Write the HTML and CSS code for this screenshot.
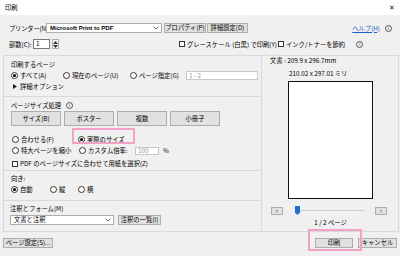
FILE: index.html
```html
<!DOCTYPE html>
<html lang="ja">
<head>
<meta charset="UTF-8">
<title>印刷</title>
<link rel="stylesheet" href="styles.css">
</head>
<body>
    <div class="titlebar">
        <span>印刷</span>
        <span class="close">✕</span>
    </div>
    <div class="top">
        <div class="row">
            <span class="lbl lbl-printer">プリンター(N):</span>
            <div class="select select-printer">
                <span>Microsoft Print to PDF</span>
                <svg class="chev" width="6" height="4" viewBox="0 0 6 4"><path d="M0.5 0.5 L3 3 L5.5 0.5" fill="none" stroke="#555" stroke-width="0.8"/></svg>
            </div>
            <button class="btn btn-prop">プロパティ(P)</button>
            <button class="btn btn-adv">詳細設定(D)</button>
            <a class="help" href="#">ヘルプ(H)</a>
            <span class="info">i</span>
        </div>
        <div class="row">
            <span class="lbl lbl-copies">部数(C):</span>
            <div class="input input-copies">1</div>
            <div class="spin">
                <svg width="5" height="3" viewBox="0 0 5 3"><path d="M0 3 L2.5 0 L5 3Z" fill="#333"/></svg>
                <svg width="5" height="3" viewBox="0 0 5 3"><path d="M0 0 L2.5 3 L5 0Z" fill="#333"/></svg>
            </div>
            <label class="check check-gray"><span class="box"></span>グレースケール (白黒) で印刷(Y)</label>
            <label class="check"><span class="box"></span>インク/トナーを節約</label>
            <span class="info info-ink">i</span>
        </div>
    </div>

    <div class="panels">
        <div class="left">
            <div class="section s-pages">
                <div class="head">印刷するページ</div>
                <div class="line">
                    <label class="radio w52"><span class="dot on"></span>すべて(A)</label>
                    <label class="radio w67"><span class="dot"></span>現在のページ(U)</label>
                    <label class="radio w56"><span class="dot"></span>ページ指定(G)</label>
                    <div class="input input-range">1 - 2</div>
                </div>
                <div class="line more">
                    <svg width="4" height="5" viewBox="0 0 4 5"><path d="M0 0 L4 2.5 L0 5Z" fill="#222"/></svg>
                    <span>詳細オプション</span>
                </div>
            </div>

            <div class="section s-size">
                <div class="head">ページサイズ処理 <span class="info">i</span></div>
                <div class="tabs">
                    <button class="btn tab">サイズ(B)</button>
                    <button class="btn tab">ポスター</button>
                    <button class="btn tab">複数</button>
                    <button class="btn tab">小冊子</button>
                </div>
                <div class="line opts">
                    <label class="radio w66"><span class="dot"></span>合わせる(F)</label>
                    <label class="radio mark"><span class="dot on"></span>実際のサイズ<span class="hl hl-actual"></span></label>
                </div>
                <div class="line opts2">
                    <label class="radio w67"><span class="dot"></span>特大ページを縮小</label>
                    <label class="radio w56"><span class="dot"></span>カスタム倍率:</label>
                    <div class="input input-scale">100</div>
                    <span class="pct">%</span>
                </div>
                <div class="line opts3">
                    <label class="check"><span class="box"></span>PDF のページサイズに合わせて用紙を選択(Z)</label>
                </div>
            </div>

            <div class="section s-orient">
                <div class="head">向き:</div>
                <div class="line">
                    <label class="radio w39"><span class="dot on"></span>自動</label>
                    <label class="radio w28"><span class="dot"></span>縦</label>
                    <label class="radio"><span class="dot"></span>横</label>
                </div>
            </div>

            <div class="section s-notes">
                <div class="head">注釈とフォーム(M)</div>
                <div class="line notes">
                    <div class="select select-notes">
                        <span>文書と注釈</span>
                        <svg class="chev" width="6" height="4" viewBox="0 0 6 4"><path d="M0.5 0.5 L3 3 L5.5 0.5" fill="none" stroke="#555" stroke-width="0.8"/></svg>
                    </div>
                    <button class="btn btn-list">注釈の一覧(I)</button>
                </div>
            </div>
        </div>

        <div class="right">
            <div class="doc">文書 : 209.9 x 296.7mm</div>
            <div class="size">210.02 x 297.01 ミリ</div>
            <div class="preview"></div>
            <div class="slider">
                <button class="btn nav">‹</button>
                <div class="track">
                    <svg class="thumb" width="5" height="9" viewBox="0 0 5 9"><path d="M0 0 H5 V6.5 L2.5 9 L0 6.5Z" fill="#1e6fd0"/></svg>
                </div>
                <button class="btn nav">›</button>
            </div>
            <div class="pages">1 / 2 ページ</div>
        </div>
    </div>

    <div class="footer">
        <button class="btn btn-setup">ページ設定(S)...</button>
        <div class="actions">
            <div class="mark">
                <button class="btn btn-print">印刷</button>
                <span class="hl hl-print"></span>
            </div>
            <button class="btn btn-cancel">キャンセル</button>
        </div>
    </div>
</body>
</html>
```

FILE: styles.css
```css
* {
    box-sizing: border-box;
}
body {
    margin: 0;
    width: 400px;
    height: 256px;
    overflow: hidden;
    background: #f0f0f0;
    color: #000;
    font: 6.3px/9px "Noto Sans CJK JP", sans-serif;
    white-space: nowrap;
}
button {
    font: inherit;
    color: inherit;
    overflow: visible;
}
.titlebar {
    height: 15px;
    background: #fff;
    display: flex;
    align-items: center;
    justify-content: space-between;
    padding: 0 5px;
}
.close {
    font-size: 7px;
    color: #222;
}

/* top rows */
.top {
    padding: 8px 8px 0 9px;
}
.row {
    display: flex;
    align-items: center;
    height: 10px;
}
.row + .row {
    margin-top: 6px;
}
.lbl {
    flex-shrink: 0;
}
.lbl-printer {
    width: 37px;
    letter-spacing: -0.2px;
}
.lbl-copies {
    width: 24px;
}
.select {
    height: 10px;
    background: #fff;
    border: 1px solid #adadad;
    display: flex;
    align-items: center;
    justify-content: space-between;
    padding: 0 2px 0 3px;
    line-height: 8px;
}
.select-printer {
    width: 116px;
    font-weight: bold;
    font-family: "Liberation Sans", sans-serif;
    font-size: 6px;
}
.btn {
    background: #e1e1e1;
    border: 1px solid #adadad;
    padding: 0;
    height: 10px;
    line-height: 8px;
    text-align: center;
    white-space: nowrap;
}
.btn-prop {
    width: 42px;
    margin-left: 2px;
}
.btn-adv {
    width: 41px;
    margin-left: 1px;
}
.help {
    margin-left: auto;
    color: #1a5fc8;
    text-decoration: underline;
}
.info {
    display: inline-flex;
    align-items: center;
    justify-content: center;
    width: 7px;
    height: 7px;
    border: 0.8px solid #555;
    border-radius: 50%;
    font: 5px/1 "DejaVu Sans", sans-serif;
    color: #444;
    margin-left: 5px;
    vertical-align: middle;
}
.info-ink {
    margin-left: 11px;
}
.input {
    height: 10px;
    background: #fff;
    border: 1px solid #7a7a7a;
    padding: 0 2px;
    line-height: 8px;
}
.input-copies {
    width: 17px;
}
.spin {
    width: 7px;
    height: 10px;
    margin-left: 2px;
    border: 1px solid #adadad;
    background: #f5f5f5;
    display: flex;
    flex-direction: column;
    align-items: center;
    justify-content: space-around;
}
.check {
    display: flex;
    align-items: center;
}
.box {
    width: 6px;
    height: 6px;
    border: 1px solid #333;
    background: #fff;
    margin-right: 2px;
}
.check-gray {
    margin-left: 120px;
    width: 99px;
}

/* panels */
.panels {
    display: flex;
    margin: 6px 0 0 3px;
    height: 177px;
}
.left {
    width: 259px;
    border: 1px solid #d9d9d9;
    display: flex;
    flex-direction: column;
}
.section {
    border-bottom: 1px solid #d9d9d9;
    padding: 4px 0 0 7px;
}
.section:last-child {
    border-bottom: 0;
}
.s-pages {
    height: 41px;
}
.s-size {
    height: 74px;
}
.s-orient {
    height: 30px;
    padding-top: 3px;
}
.s-notes {
    flex: 1;
    padding-top: 3px;
    padding-left: 6px;
}
.head {
    height: 9px;
    display: flex;
    align-items: center;
}
.line {
    display: flex;
    align-items: center;
    height: 9px;
    margin-top: 2px;
}
.radio {
    display: flex;
    align-items: center;
    position: relative;
}
.dot {
    width: 7px;
    height: 7px;
    border: 1px solid #333;
    border-radius: 50%;
    background: #fff;
    margin-right: 2px;
    display: flex;
    align-items: center;
    justify-content: center;
}
.dot.on::after {
    content: '';
    width: 3px;
    height: 3px;
    border-radius: 50%;
    background: #000;
}
.w28 { width: 28px; }
.w39 { width: 39px; }
.w52 { width: 52px; }
.w56 { width: 56px; }
.w66 { width: 66px; }
.w67 { width: 67px; }
.input-range {
    width: 72px;
    height: 9px;
    border-color: #c8c8c8;
    color: #999;
}
.more {
    padding-left: 2px;
}
.more svg {
    margin-right: 3px;
}
.tabs {
    display: flex;
    gap: 3px;
    margin-top: 1px;
}
.tab {
    width: 50px;
    height: 15px;
    line-height: 13px;
}
.opts {
    margin-top: 9px;
    padding-left: 1px;
}
.opts2 {
    padding-left: 1px;
}
.opts3 {
    margin-top: 4px;
    padding-left: 1px;
}
.input-scale {
    width: 24px;
    height: 8px;
    line-height: 6px;
    border-color: #c8c8c8;
    color: #999;
}
.pct {
    margin-left: 4px;
}
.hl {
    position: absolute;
    border: 2px solid #f2a2c6;
    pointer-events: none;
}
.hl-actual {
    left: -6px;
    top: -7px;
    width: 63px;
    height: 16px;
}
.notes {
    margin-top: 2px;
    height: 10px;
}
.select-notes {
    width: 104px;
}
.btn-list {
    width: 43px;
    margin-left: 4px;
}

/* preview */
.right {
    width: 137px;
    border: 1px solid #d9d9d9;
    border-left: 0;
    padding-left: 8px;
}
.doc {
    height: 9px;
}
.size {
    margin: 4px 0 0 19px;
    height: 9px;
}
.preview {
    width: 85px;
    height: 118px;
    margin: 3px 0 0 18px;
    background: #fff;
    border: 1.5px solid #111;
}
.slider {
    display: flex;
    align-items: center;
    margin-top: 7px;
    height: 9px;
}
.nav {
    width: 12px;
    height: 8px;
    line-height: 6px;
    font-size: 6px;
    margin-left: 1px;
}
.track {
    width: 70px;
    height: 1px;
    background: #cfcfcf;
    margin: 0 9px 0 12px;
    position: relative;
}
.thumb {
    position: absolute;
    left: 0;
    top: -4px;
}
.pages {
    width: 85px;
    margin: 3px 0 0 18px;
    text-align: center;
}

/* footer */
.footer {
    display: flex;
    padding: 6px 3px 0 3px;
}
.btn-setup {
    width: 50px;
}
.actions {
    margin-left: auto;
    display: flex;
    gap: 5px;
}
.mark {
    position: relative;
}
.btn-print {
    width: 38px;
}
.btn-cancel {
    width: 39px;
}
.hl-print {
    left: -7px;
    top: -9px;
    width: 54px;
    height: 22px;
}
```
